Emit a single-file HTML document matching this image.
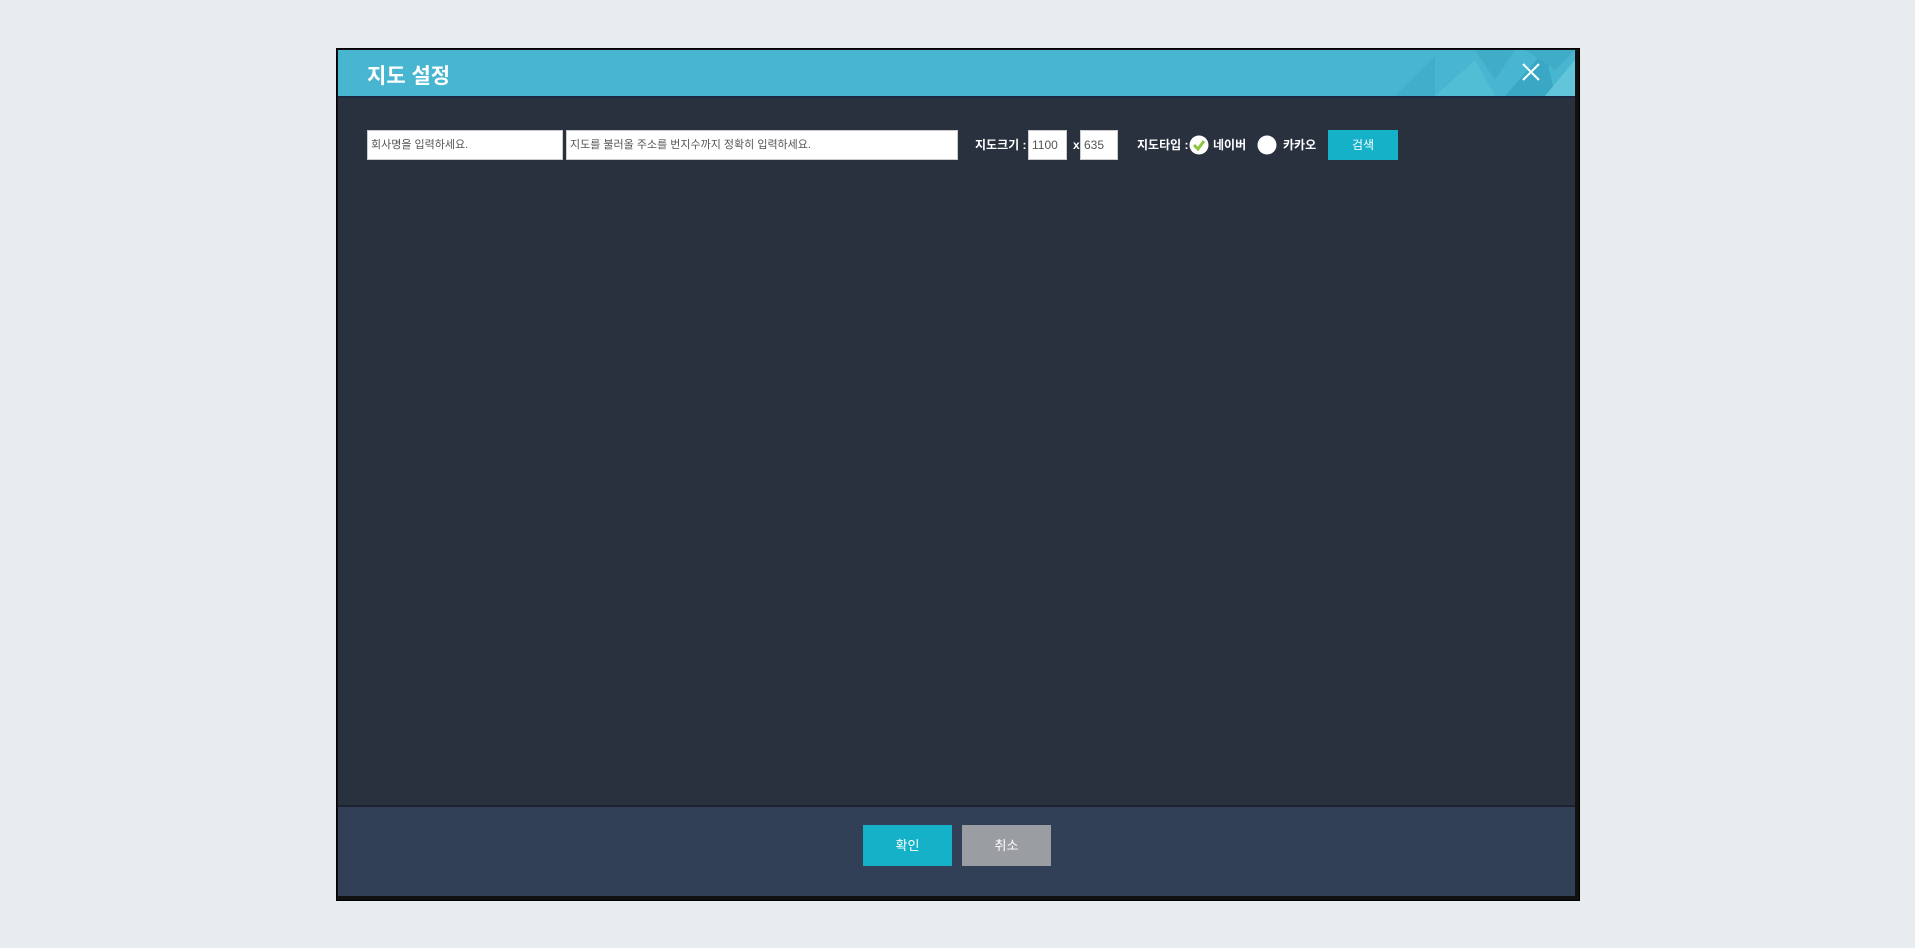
<!DOCTYPE html>
<html><head><meta charset="utf-8"><style>
body{margin:0;width:1915px;height:948px;background:#e8ecef;font-family:"Liberation Sans","Noto Sans CJK KR",sans-serif;position:relative;overflow:hidden}
.dlg{position:absolute;left:336px;top:48px;width:1244px;height:853px;background:#111;border:1px solid #000;box-sizing:border-box}
.hd{position:absolute;left:1px;top:1px;right:4px;height:46px;background:#48b6d1;border-bottom:2px solid #1b2840;overflow:hidden}
.hd h1{margin:0;position:absolute;left:29px;top:10px;font-size:21px;color:#fff;font-weight:bold}
.bd{position:absolute;left:1px;top:49px;right:4px;height:707px;background:#29313f;border-bottom:2px solid #1c2230}
.ft{position:absolute;left:1px;top:758px;right:4px;height:89px;background:#324057}
.in{position:absolute;top:32px;height:30px;background:#fff;border:1px solid #ccc;box-sizing:border-box;font-size:11px;color:#555;line-height:28px;padding-left:3px}
.lb{position:absolute;top:32px;line-height:30px;color:#fff;font-size:12px;font-weight:bold}
.btn{position:absolute;color:#fff;text-align:center;font-size:13px}
</style></head><body>
<div class="dlg">
<div class="hd"><h1>지도 설정</h1>
<svg style="position:absolute;right:0;top:0" width="220" height="46"><g opacity=".5">
<polygon points="40,46 80,6 80,46" fill="#3ba8c4"/><polygon points="80,46 120,10 140,46" fill="#5bc6dc"/><polygon points="120,0 160,0 140,30" fill="#3aa3bf"/><polygon points="150,46 190,0 200,46" fill="#2e9bb8"/><polygon points="190,46 220,10 220,46" fill="#7dd4e4"/><polygon points="170,0 220,0 200,20" fill="#38a5c1"/></g>
<path d="M168 14 L184 30 M184 14 L168 30" stroke="#fff" stroke-width="2"/></svg></div>
<div class="bd">
<div class="in" style="left:29px;width:196px">회사명을 입력하세요.</div>
<div class="in" style="left:228px;width:392px">지도를 불러올 주소를 번지수까지 정확히 입력하세요.</div>
<div class="lb" style="left:637px">지도크기 :</div>
<div class="in" style="left:690px;width:39px;font-size:12px">1100</div>
<div class="lb" style="left:735px">x</div>
<div class="in" style="left:742px;width:38px;font-size:12px">635</div>
<div class="lb" style="left:799px">지도타입 :</div>
<svg style="position:absolute;left:851px;top:37px" width="20" height="20"><circle cx="10" cy="10" r="9.5" fill="#fff"/><path d="M5 10 L9 14 L15 6" stroke="#8bc53f" stroke-width="3" fill="none"/></svg>
<div class="lb" style="left:875px">네이버</div>
<svg style="position:absolute;left:919px;top:37px" width="20" height="20"><circle cx="10" cy="10" r="9.5" fill="#fff"/></svg>
<div class="lb" style="left:945px">카카오</div>
<div class="btn" style="left:990px;top:32px;width:70px;height:30px;line-height:30px;background:#14b1c9;font-size:12px">검색</div>
</div>
<div class="ft">
<div class="btn" style="left:525px;top:18px;width:89px;height:41px;line-height:41px;background:#14b1c9">확인</div>
<div class="btn" style="left:624px;top:18px;width:89px;height:41px;line-height:41px;background:#9a9da1">취소</div>
</div>
</div>
</body></html>
